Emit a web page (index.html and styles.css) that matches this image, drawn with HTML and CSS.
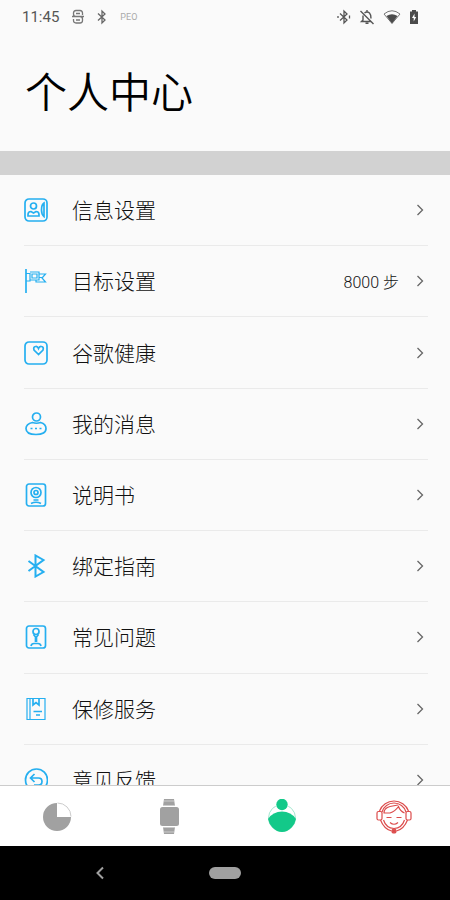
FILE: index.html
```html
<!DOCTYPE html>
<html lang="zh-CN">
<head>
<meta charset="utf-8">
<meta name="viewport" content="width=device-width, initial-scale=1">
<title>个人中心</title>
<link rel="stylesheet" href="styles.css">
</head>
<body>
<div class="status">
  <div class="status-group status-left">
    <span class="clock">11:45</span>
    <svg width="12" height="16" viewBox="0 0 12 16" fill="none" stroke="#777" stroke-width="1.3"><path d="M10.5 6V4Q10.5 1.500 8 1.500H4Q1.500 1.500 1.500 4V5Q1.500 7.500 4 7.500H8Q10.500 7.500 10.500 10V11.500Q10.500 14 8 14H4Q1.500 14 1.500 11.500V10M0 7.500H12M4 4.500H8M4 11H8"/></svg>
    <svg width="10" height="16" viewBox="0 0 10 16" fill="none" stroke="#666" stroke-width="1.3"><path d="M1 4.500 8 11 5 14V2L8 5 1 11.500"/></svg>
    <span class="ped">PEO</span>
  </div>
  <div class="status-group status-right">
    <svg width="14" height="16" viewBox="0 0 14 16" fill="none" stroke="#555" stroke-width="1.300"><path d="M3 4.500 10 11 7 14V2L10 5 3 11.500M1 7V9M12.500 6.500V9.500"/></svg>
    <svg width="16" height="16" viewBox="0 0 16 16" fill="none" stroke="#555" stroke-width="1.400"><path d="M1.500 2 14.500 15M4 6.500V11L2.500 12.500H12M5.500 4Q8 2 10.500 4 12 5.500 12 9.500M8 1V3M6.500 14.300H9.500"/></svg>
    <svg width="18" height="16" viewBox="0 0 18 16"><path d="M1 5Q9-1.500 17 5L9 14.500Z" fill="none" stroke="#777"/><path d="M3.500 7Q9 3.500 14.500 7L9 14.500Z" fill="#4b4b4b"/></svg>
    <svg width="10" height="16" viewBox="0 0 10 16"><path d="M3 1H7V2.500H9V15H1V2.500H3Z" fill="#4b4b4b"/><path d="M5.500 4.500 3 9H4.700V12.500L7.200 8H5.500Z" fill="#fff"/></svg>
  </div>
</div>
<header class="head"><h1>个人中心</h1></header>
<main class="content">
  <ul class="menu">
    <li><a class="row" href="#info">
      <svg class="icon" viewBox="0 0 24 24"><rect x="1" y="1" width="22" height="22" rx="4"/><circle cx="9.500" cy="8" r="3"/><path d="M4 18V16.500Q4 13.500 7 13.500L9.500 15 12 13.500Q15 13.500 15 16.500V18ZM20 5Q17.500 6.500 17.500 12 17.500 16.500 20 18.500Z"/></svg>
      <span class="label">信息设置</span><svg class="chevron" viewBox="0 0 8 12"><path d="M1.500 1 6.500 6 1.500 11"/></svg></a></li>
    <li><a class="row" href="#goal">
      <svg class="icon" viewBox="0 0 24 24"><path d="M2 0V24"/><path class="thin" d="M2 4.500H6V12H2M6 3H15V11H6M15 5H21.500L18 9 21.500 13H12V11M8 5H13V9H8ZM15 8.500H18"/></svg>
      <span class="label">目标设置</span><span class="value">8000 步</span><svg class="chevron" viewBox="0 0 8 12"><path d="M1.500 1 6.500 6 1.500 11"/></svg></a></li>
    <li><a class="row" href="#health">
      <svg class="icon" viewBox="0 0 24 24"><rect x="1" y="1" width="22" height="22" rx="4"/><path d="M14.500 13.500 10 9Q9 6 11.500 5.500 13.500 5 14.500 7.500 15.500 5 17.500 5.500 20 6 19 9Z"/></svg>
      <span class="label">谷歌健康</span><svg class="chevron" viewBox="0 0 8 12"><path d="M1.500 1 6.500 6 1.500 11"/></svg></a></li>
    <li><a class="row" href="#messages">
      <svg class="icon" viewBox="0 0 24 24"><circle cx="12.500" cy="5" r="4"/><path d="M8.500 10.500Q2 12 2 16.500 2 22.500 12 22.500 22 22.500 22 16.500 22 12 16.500 10.500Q12.500 12 8.500 10.500Z"/><path d="M6.500 16.500H8.500M11 16.500H13M15.500 16.500H17.500"/></svg>
      <span class="label">我的消息</span><svg class="chevron" viewBox="0 0 8 12"><path d="M1.500 1 6.500 6 1.500 11"/></svg></a></li>
    <li><a class="row" href="#manual">
      <svg class="icon" viewBox="0 0 24 24"><rect x="2.500" y="1" width="19" height="22" rx="2.500"/><circle cx="12" cy="9.500" r="5"/><circle cx="12" cy="9.500" r="2"/><path d="M9.500 17H14.500M7 20.500Q12 18 17 20.500"/></svg>
      <span class="label">说明书</span><svg class="chevron" viewBox="0 0 8 12"><path d="M1.500 1 6.500 6 1.500 11"/></svg></a></li>
    <li><a class="row" href="#pairing">
      <svg class="icon" viewBox="0 0 24 24"><path class="bold" d="M4.500 7 19.500 18 11.500 22.500V1.500L19.500 6 4.500 17"/></svg>
      <span class="label">绑定指南</span><svg class="chevron" viewBox="0 0 8 12"><path d="M1.500 1 6.500 6 1.500 11"/></svg></a></li>
    <li><a class="row" href="#faq">
      <svg class="icon" viewBox="0 0 24 24"><rect x="2.500" y="1" width="19" height="22" rx="2.500"/><circle cx="12" cy="6.500" r="3"/><path d="M9.500 9.500 11.500 12V17M14.500 9.500 12.500 12V17M7 21Q7.500 18.500 10 18.500H14Q16.500 18.500 17 21"/></svg>
      <span class="label">常见问题</span><svg class="chevron" viewBox="0 0 8 12"><path d="M1.500 1 6.500 6 1.500 11"/></svg></a></li>
    <li><a class="row" href="#warranty">
      <svg class="icon" viewBox="0 0 24 24"><path class="thin" d="M3 1.500H21V22.500H3ZM6 1.500V22.500"/><path d="M9 1.500V8L12 5.500 15 8V1.500M9.500 14.500H18M12 18H16"/></svg>
      <span class="label">保修服务</span><svg class="chevron" viewBox="0 0 8 12"><path d="M1.500 1 6.500 6 1.500 11"/></svg></a></li>
    <li><a class="row" href="#feedback">
      <svg class="icon" viewBox="0 0 24 24"><circle cx="12.500" cy="12" r="11"/><path d="M10.500 6 6.500 10 10.500 14M6.500 10H14.500Q18 10 18 13.500T14.500 17H10"/></svg>
      <span class="label">意见反馈</span><svg class="chevron" viewBox="0 0 8 12"><path d="M1.500 1 6.500 6 1.500 11"/></svg></a></li>
  </ul>
</main>
<nav class="tabs">
  <button type="button" aria-label="统计"><svg width="36" height="36" viewBox="0 0 36 36"><path d="M18 4A14 14 0 1 0 32 18H18Z" fill="#a1a1a1"/><path d="M18.500 4A13.500 13.500 0 0 1 32 17.500" fill="none" stroke="#ccc"/></svg></button>
  <button type="button" aria-label="手表"><svg width="36" height="36" viewBox="0 0 36 36" fill="#a1a1a1"><rect x="9" y="8" width="19" height="19" rx="2.500"/><path d="M13 0H23L24 7H12ZM12 28H24L23 35H13Z"/><path d="M12 6.500H24M12 28.500H24M13 2H23M13 33H23" stroke="#ccc"/></svg></button>
  <button type="button" aria-label="个人中心" aria-current="page"><svg width="36" height="36" viewBox="0 0 36 36"><circle cx="18" cy="19" r="13.500" fill="none" stroke="#a5e7d0"/><circle cx="18" cy="6" r="6.500" fill="#fff"/><circle cx="18" cy="5.500" r="5.700" fill="#13c989"/><path d="M4 20Q9 12.500 18 12.500T32 20Q31 25 27.500 28.500 23 33 18 33T8.500 28.500Q5 25 4 20Z" fill="#13c989"/></svg></button>
  <button type="button" aria-label="客服"><svg width="36" height="36" viewBox="0 0 36 36" fill="none" stroke="#dc4c4c" stroke-width="1.200"><path d="M3.500 12A15.500 15.500 0 0 1 32.500 12M6 13A12.500 12.500 0 0 1 30 13M4.500 21Q8 30 15.500 32M7.500 21Q10 29 18 29.500 26 29 28.500 21M20.500 32Q28 30 31.500 21"/><rect x="1" y="12.500" width="5" height="8.500" rx="1.500"/><rect x="30" y="12.500" width="5" height="8.500" rx="1.500"/><path d="M7.500 14H14Q19 12.500 22.500 7.500 24 12 28.500 14M8 14Q8 9 14 7.500L22 6M10.500 18.500H15.500M20.500 18.500H25.500M14 23.500Q18 27 22 23.500"/><circle cx="18" cy="32" r="2" fill="#dc4c4c"/></svg></button>
</nav>
<div class="system">
  <button type="button" class="back" aria-label="返回"><svg width="10" height="14" viewBox="0 0 10 14" fill="none" stroke="#a0a0a0" stroke-width="2"><path d="M8 1.500 2.500 7 8 12.500"/></svg></button>
  <button type="button" class="home" aria-label="主屏幕"></button>
</div>
</body>
</html>
```

FILE: styles.css
```css
* { box-sizing: border-box; }

body {
  margin: 0;
  height: 100vh;
  display: flex;
  flex-direction: column;
  overflow: hidden;
  background: #fafafa;
  color: #333;
  font-family: Roboto, "Noto Sans CJK SC", sans-serif;
}

svg { display: block; flex: none; }

button {
  display: flex;
  justify-content: center;
  align-items: center;
  padding: 0;
  border: 0;
  background: none;
}

.status {
  flex: none;
  display: flex;
  justify-content: space-between;
  align-items: center;
  height: 34px;
  padding: 0 31px 0 22px;
}

.status-group { display: flex; align-items: center; }
.status-left { gap: 13px; }
.status-right { gap: 8px; }
.clock { font-size: 15px; color: #555; }
.ped { font-size: 9px; color: #aaa; }

.head {
  flex: none;
  padding: 29px 25px 27px;
  border-bottom: 24px solid #d2d2d2;
}

.head h1 {
  margin: 0;
  font-size: 42px;
  line-height: 61px;
  font-weight: 350;
  color: #000;
}

.content {
  flex: 1;
  min-height: 0;
  overflow: hidden;
}

.menu {
  display: grid;
  grid-auto-rows: 1fr;
  min-height: 641px;
  margin: 0;
  padding: 0 22px 0 24px;
  list-style: none;
}

.menu li { display: flex; border-bottom: 1px solid #eaeaea; }

.row {
  flex: 1;
  display: flex;
  align-items: center;
  padding-right: 4px;
  color: #111;
  text-decoration: none;
}

.icon {
  width: 24px;
  height: 24px;
  margin-right: 24px;
  fill: none;
  stroke: #25aff0;
  stroke-width: 1.7;
}

.icon .thin { stroke-width: 1.2; }
.icon .bold { stroke-width: 2; }

.label {
  flex: 1;
  padding-top: 2px;
  font-size: 21px;
  line-height: 30px;
  font-weight: 300;
}

.value { margin-right: 17px; font-size: 16px; font-weight: 300; }

.chevron {
  width: 8px;
  height: 12px;
  fill: none;
  stroke: #666;
  stroke-width: 1.3;
}

.tabs {
  flex: none;
  display: grid;
  grid-template-columns: repeat(4, 1fr);
  height: 61px;
  padding: 2px 0 0 1px;
  border-top: 1px solid #ccc;
  background: #fff;
}

.system {
  flex: none;
  display: grid;
  grid-template-columns: 1fr 32px 1fr;
  align-items: center;
  height: 54px;
  background: #000;
}

.back { padding-right: 9px; }

.home { height: 12px; border-radius: 6px; background: #a0a0a0; }
```
